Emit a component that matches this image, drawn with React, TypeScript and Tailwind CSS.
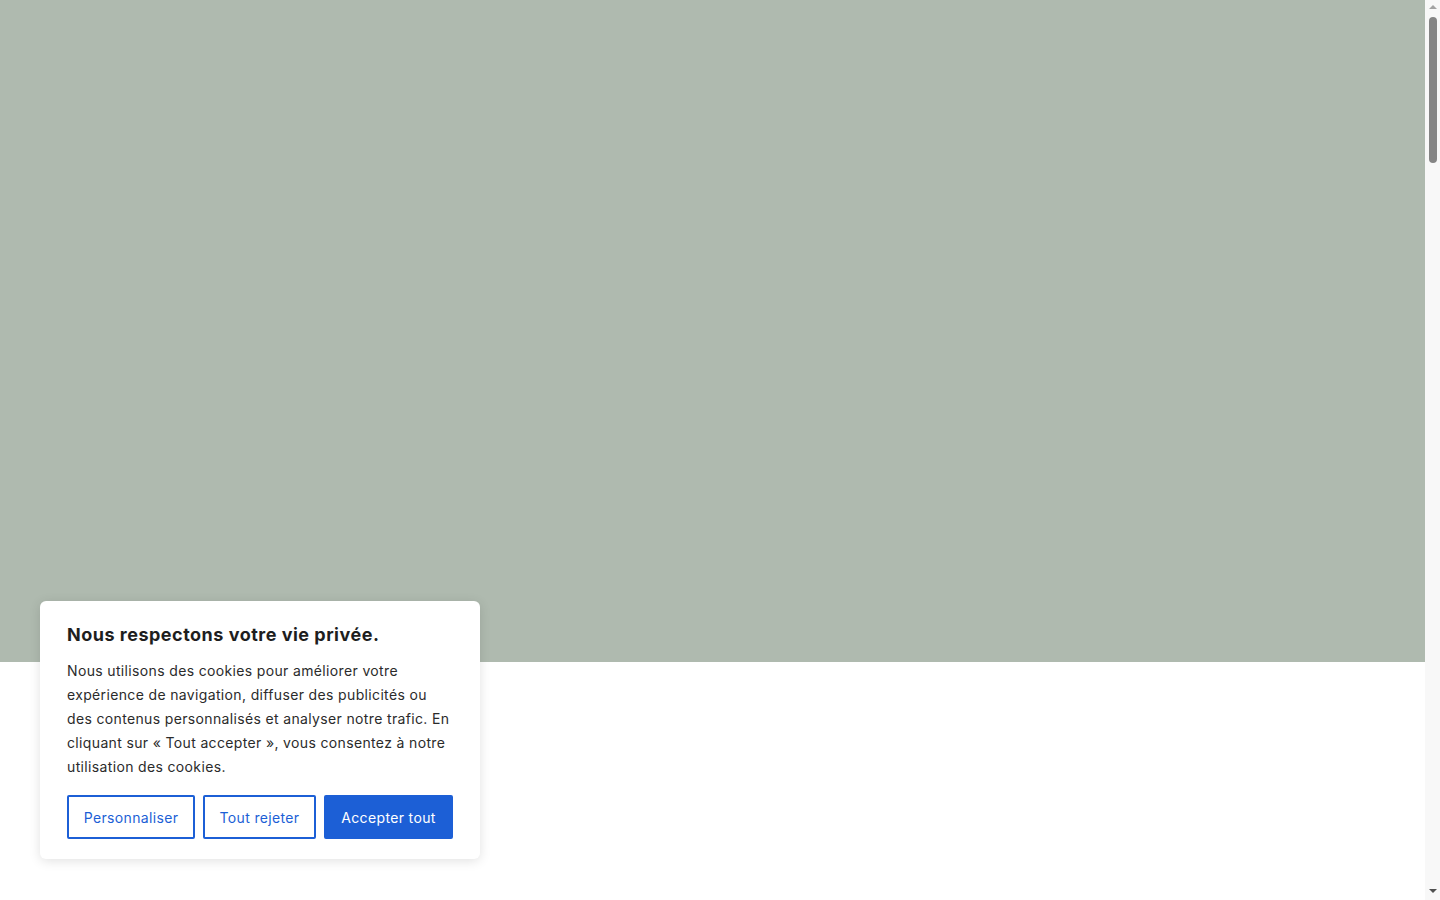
export default function App() {
  return (
    <div className="flex h-screen overflow-hidden bg-white font-['Inter',sans-serif]">
      <main className="relative flex-1">
        <div className="h-[662px] bg-[#afbaaf]" />

        <div className="absolute bottom-[41px] left-10 w-[440px] rounded-md bg-white px-[27px] pt-[22px] pb-[20px] shadow-[0_2px_12px_rgba(0,0,0,0.12)]">
          <h2 className="text-[18px] font-bold leading-6 tracking-[0.5px] text-[#1e1e1e]">
            Nous respectons votre vie privée.
          </h2>
          <p className="mt-3 text-[14px] leading-6 tracking-[0.35px] text-[#2b2b2b]">
            Nous utilisons des cookies pour améliorer votre
            <br />
            expérience de navigation, diffuser des publicités ou
            <br />
            des contenus personnalisés et analyser notre trafic. En
            <br />
            cliquant sur « Tout accepter », vous consentez à notre
            <br />
            utilisation des cookies.
          </p>
          <div className="mt-4 flex gap-2">
            <button className="h-11 w-32 rounded-[2px] border-2 border-[#1c5fd6] bg-white text-[14px] tracking-[0.35px] text-[#1c5fd6]">
              Personnaliser
            </button>
            <button className="h-11 w-[113px] rounded-[2px] border-2 border-[#1c5fd6] bg-white text-[14px] tracking-[0.35px] text-[#1c5fd6]">
              Tout rejeter
            </button>
            <button className="h-11 w-[129px] rounded-[2px] border-2 border-[#1c5fd6] bg-[#1c5fd6] text-[14px] tracking-[0.35px] text-white">
              Accepter tout
            </button>
          </div>
        </div>
      </main>

      <div className="flex w-[15px] flex-col items-center bg-[#f8f8f8]">
        <div className="mt-[5px] h-0 w-0 border-x-4 border-b-4 border-x-transparent border-b-[#a3a3a3]" />
        <div className="mt-2 h-[146px] w-[8px] rounded-full bg-[#858585]" />
        <div className="flex-1" />
        <div className="mb-[7px] h-0 w-0 border-x-4 border-t-4 border-x-transparent border-t-[#505050]" />
      </div>
    </div>
  )
}
